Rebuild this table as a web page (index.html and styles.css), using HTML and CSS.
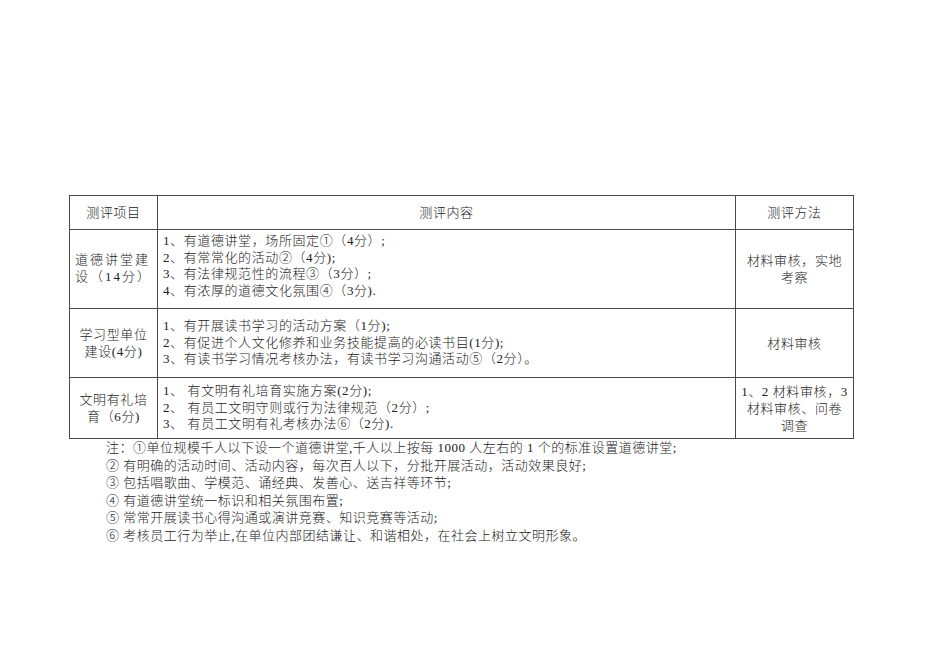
FILE: index.html
```html
<!DOCTYPE html>
<html lang="zh-CN">
<head>
<meta charset="utf-8">
<title>测评</title>
<link rel="stylesheet" href="styles.css">
</head>
<body>
<div class="page">
  <table class="grid">
    <colgroup>
      <col class="c1">
      <col class="c2">
      <col class="c3">
    </colgroup>
    <tr class="r0">
      <td class="center">测评项目</td>
      <td class="center">测评内容</td>
      <td class="center">测评方法</td>
    </tr>
    <tr class="r1">
      <td class="item spaced">道德讲堂建<br>设（14分）</td>
      <td class="content pb">1、有道德讲堂，场所固定①（4分）;<br>2、有常常化的活动②（4分);<br>3、有法律规范性的流程③（3分）;<br>4、有浓厚的道德文化氛围④（3分).</td>
      <td class="center">材料审核，实地<br>考察</td>
    </tr>
    <tr class="r2">
      <td class="center">学习型单位<br>建设(4分)</td>
      <td class="content">1、有开展读书学习的活动方案（1分);<br>2、有促进个人文化修养和业务技能提高的必读书目(1分);<br>3、有读书学习情况考核办法，有读书学习沟通活动⑤（2分）。</td>
      <td class="center">材料审核</td>
    </tr>
    <tr class="r3">
      <td class="center">文明有礼培<br>育（6分)</td>
      <td class="content">1、 有文明有礼培育实施方案(2分);<br>2、 有员工文明守则或行为法律规范（2分）;<br>3、 有员工文明有礼考核办法⑥（2分).</td>
      <td class="center">1、2 材料审核，3<br>材料审核、问卷<br>调查</td>
    </tr>
  </table>
  <div class="notes">
    <p>注：①单位规模千人以下设一个道德讲堂,千人以上按每 1000 人左右的 1 个的标准设置道德讲堂;</p>
    <p>② 有明确的活动时间、活动内容，每次百人以下，分批开展活动，活动效果良好;</p>
    <p>③ 包括唱歌曲、学模范、诵经典、发善心、送吉祥等环节;</p>
    <p>④ 有道德讲堂统一标识和相关氛围布置;</p>
    <p>⑤ 常常开展读书心得沟通或演讲竞赛、知识竞赛等活动;</p>
    <p>⑥ 考核员工行为举止,在单位内部团结谦让、和谐相处，在社会上树立文明形象。</p>
  </div>
</div>
</body>
</html>
```

FILE: styles.css
```css
html, body {
  margin: 0;
  padding: 0;
  background: #ffffff;
}

body {
  font-family: "Liberation Serif", "Noto Sans CJK SC", serif;
  font-size: 13px;
  font-weight: 300;
  color: #222222;
}

.page {
  padding: 195px 0 0 69px;
}

.grid {
  border-collapse: collapse;
  width: 784px;
  table-layout: fixed;
}

.c1 { width: 88px; }
.c2 { width: 578px; }
.c3 { width: 118px; }

.grid td {
  border: 1px solid #4a4a4a;
  line-height: 17px;
  padding: 0;
  vertical-align: middle;
  letter-spacing: 0.6px;
}

.r0 { height: 34px; }
.r1 { height: 79px; }
.r2 { height: 69px; }
.r3 { height: 61px; }

.center {
  text-align: center;
}

.item {
  text-align: left;
  padding-left: 5px !important;
}

.spaced {
  letter-spacing: 2px !important;
  padding-bottom: 2px !important;
}

.content {
  text-align: left;
  padding-left: 5px !important;
  line-height: 16.5px !important;
}

.pb {
  padding-bottom: 6px !important;
}

.notes {
  padding-left: 37px;
}

.notes p {
  margin: 0;
  line-height: 17.6px;
  letter-spacing: 0.5px;
}
```
